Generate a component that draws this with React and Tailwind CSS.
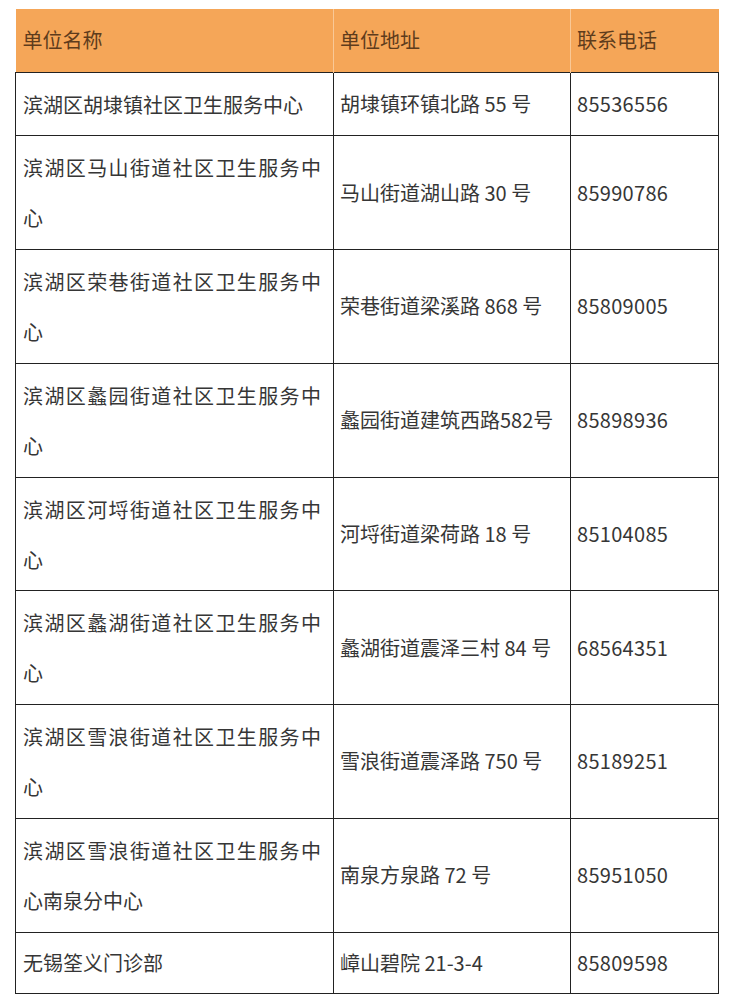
import React from "react";

const rows = [
  { name: "滨湖区胡埭镇社区卫生服务中心", addr: "胡埭镇环镇北路 55 号", tel: "85536556" },
  { name: "滨湖区马山街道社区卫生服务中心", addr: "马山街道湖山路 30 号", tel: "85990786" },
  { name: "滨湖区荣巷街道社区卫生服务中心", addr: "荣巷街道梁溪路 868 号", tel: "85809005" },
  { name: "滨湖区蠡园街道社区卫生服务中心", addr: "蠡园街道建筑西路582号", tel: "85898936" },
  { name: "滨湖区河埒街道社区卫生服务中心", addr: "河埒街道梁荷路 18 号", tel: "85104085" },
  { name: "滨湖区蠡湖街道社区卫生服务中心", addr: "蠡湖街道震泽三村 84 号", tel: "68564351" },
  { name: "滨湖区雪浪街道社区卫生服务中心", addr: "雪浪街道震泽路 750 号", tel: "85189251" },
  { name: "滨湖区雪浪街道社区卫生服务中心南泉分中心", addr: "南泉方泉路 72 号", tel: "85951050" },
  { name: "无锡筌义门诊部", addr: "嶂山碧院 21-3-4", tel: "85809598" },
];

const font = { fontFamily: '"Noto Sans CJK SC", "Noto Sans", sans-serif' };

export default function App() {
  return (
    <div className="min-h-screen bg-white pt-[9px] pl-[15px]" style={font}>
      <table className="border-collapse table-fixed w-[703px] text-[20px] leading-[50px] text-[#363636]">
        <colgroup>
          <col className="w-[318px]" />
          <col className="w-[237px]" />
          <col className="w-[148px]" />
        </colgroup>
        <thead>
          <tr className="bg-[#f5a658] text-[#5e3c1c] h-[63px]">
            <th className="text-left font-normal pl-[7px] border-r border-[#f9c896]">单位名称</th>
            <th className="text-left font-normal pl-[6px] border-r border-[#f9c896]">单位地址</th>
            <th className="text-left font-normal pl-[6px]">联系电话</th>
          </tr>
        </thead>
        <tbody>
          {rows.map((r, i) => {
            const last = i === rows.length - 1;
            return (
              <tr key={i}>
                <td
                  className={`border border-[#222] align-top pl-[7px] pr-[12px] text-justify ${
                    last ? "pt-[5px] pb-[5px]" : "pt-[7px] pb-[5.75px]"
                  }`}
                >
                  {r.name}
                </td>
                <td className="border border-[#222] align-middle pl-[6px] pr-[4px] whitespace-nowrap">
                  {r.addr}
                </td>
                <td className="border border-[#222] align-middle pl-[6px] tracking-[0.3px]">
                  {r.tel}
                </td>
              </tr>
            );
          })}
        </tbody>
      </table>
    </div>
  );
}
